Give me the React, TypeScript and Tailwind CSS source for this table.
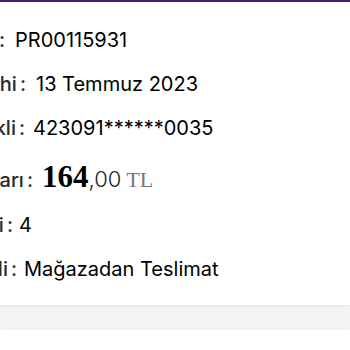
import React from 'react';

interface DetailRow {
  label: string;
  value: React.ReactNode;
  labelWidth: string;
  gap: string;
  tall?: boolean;
}

const sans = { fontFamily: 'Inter, "Noto Sans", sans-serif' };

// 金額表示
const Price: React.FC = () => (
  <span className="inline-flex items-baseline">
    <span className="text-[31px] font-bold text-black" style={{ fontFamily: '"Liberation Serif", serif' }}>
      164
    </span>
    <span className="text-[22px] font-light text-[#222]">,00</span>
    <span className="ml-[5px] text-[22px] text-[#777]" style={{ fontFamily: '"Liberation Serif", serif' }}>
      TL
    </span>
  </span>
);

const ROWS: DetailRow[] = [
  { label: 'Sipariş No', value: 'PR00115931', labelWidth: 'w-[5px]', gap: 'pl-[10px]' },
  { label: 'Sipariş Tarihi', value: '13 Temmuz 2023', labelWidth: 'w-[26px]', gap: 'pl-[10px]' },
  { label: 'Ödeme Şekli', value: '423091******0035', labelWidth: 'w-[25px]', gap: 'pl-[8px]' },
  { label: 'Sipariş Tutarı', value: <Price />, labelWidth: 'w-[33px]', gap: 'pl-[9px]', tall: true },
  { label: 'Ürün Adedi', value: '4', labelWidth: 'w-[13px]', gap: 'pl-[6px]' },
  { label: 'Teslimat Şekli', value: 'Mağazadan Teslimat', labelWidth: 'w-[17px]', gap: 'pl-[7px]' },
];

export default function App() {
  return (
    <div className="w-[350px] h-[350px] overflow-hidden bg-[#f4f4f4]" style={sans}>
      <div className="h-[2px] bg-[#4a1b6c]" />

      {/* 注文詳細カード */}
      <div className="bg-white pt-[16px] h-[303px] shadow-[0_1px_3px_rgba(0,0,0,0.08)]">
        {ROWS.map((row, idx) => (
          <div
            key={idx}
            className={`flex items-baseline whitespace-nowrap ${row.tall ? 'h-[53px] leading-[53px]' : 'h-[44px] leading-[44px]'}`}
          >
            <div className={`flex justify-end overflow-hidden shrink-0 ${row.labelWidth}`}>
              <span className="text-[20px] font-medium text-[#2a2a2a]">
                {row.label}
                <span className="ml-[3px]">:</span>
              </span>
            </div>
            <div className={`text-[20px] text-black ${row.gap}`}>{row.value}</div>
          </div>
        ))}
      </div>

      <div className="h-[25px]" />
      <div className="bg-white h-[40px] shadow-[0_-1px_2px_rgba(0,0,0,0.03)]" />
    </div>
  );
}
